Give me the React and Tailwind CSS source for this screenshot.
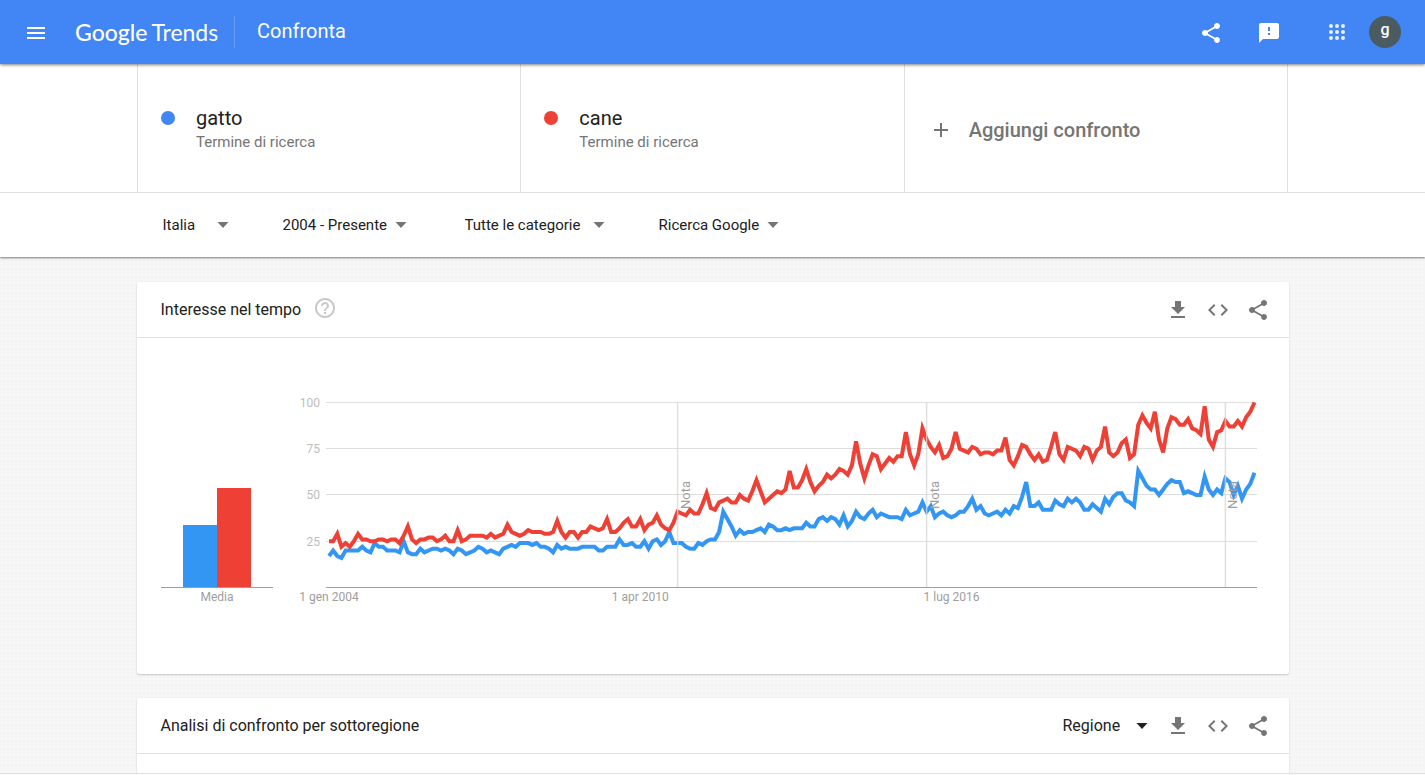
import { useState } from "react";

import {
  MdAdd,
  MdCode,
  MdFeedback,
  MdGetApp,
  MdHelpOutline,
  MdMenu,
  MdShare,
} from "react-icons/md";

// monthly values, january 2004 - august 2022
const gatto = [
  17, 20, 17, 16, 20, 20, 20, 20, 22, 20, 19, 24, 22, 22, 20, 20, 20, 19, 25,
  19, 18, 18, 21, 19, 20, 21, 21, 20, 21, 20, 18, 21, 20, 18, 19, 20, 22, 21,
  19, 20, 19, 18, 21, 22, 23, 22, 24, 24, 24, 23, 24, 22, 22, 21, 19, 23, 21,
  22, 21, 21, 21, 22, 22, 22, 22, 20, 20, 22, 22, 22, 26, 23, 23, 24, 22, 22,
  25, 21, 25, 26, 23, 25, 30, 24, 24, 24, 22, 21, 21, 24, 23, 25, 26, 26, 30,
  41, 37, 33, 28, 31, 29, 30, 30, 31, 32, 30, 34, 33, 31, 31, 32, 31, 32, 32,
  32, 35, 33, 33, 37, 38, 36, 38, 37, 34, 39, 33, 36, 41, 38, 37, 40, 42, 38,
  40, 39, 38, 38, 38, 37, 42, 39, 40, 41, 46, 41, 44, 38, 40, 41, 39, 38, 39,
  41, 41, 44, 48, 42, 44, 40, 39, 40, 41, 39, 42, 40, 44, 43, 49, 57, 44, 44,
  46, 42, 42, 42, 47, 45, 44, 48, 46, 48, 46, 42, 42, 45, 43, 41, 48, 45, 49,
  51, 51, 47, 46, 44, 63, 59, 55, 53, 53, 50, 53, 56, 58, 57, 57, 51, 52, 51,
  50, 50, 60, 53, 50, 53, 51, 59, 57, 50, 55, 48, 53, 56, 62,
];

const cane = [
  25, 25, 29, 22, 24, 22, 25, 29, 26, 26, 25, 25, 26, 26, 25, 26, 26, 24, 28,
  33, 26, 24, 26, 26, 27, 27, 25, 26, 28, 25, 25, 31, 25, 26, 28, 28, 28, 28,
  27, 29, 27, 28, 29, 34, 30, 29, 28, 29, 31, 30, 30, 30, 29, 29, 30, 36, 30,
  27, 30, 30, 27, 30, 30, 33, 32, 31, 32, 37, 30, 30, 32, 35, 37, 33, 33, 37,
  31, 34, 35, 39, 34, 32, 31, 35, 41, 40, 39, 42, 40, 40, 45, 51, 43, 42, 46,
  47, 48, 46, 46, 50, 48, 47, 52, 58, 52, 46, 48, 50, 52, 51, 53, 63, 54, 54,
  58, 64, 57, 52, 55, 57, 61, 59, 61, 64, 63, 61, 66, 79, 67, 59, 66, 72, 71,
  64, 67, 70, 68, 71, 71, 84, 72, 66, 72, 86, 80, 76, 73, 77, 70, 71, 75, 84,
  75, 74, 73, 76, 75, 72, 73, 73, 72, 74, 74, 81, 69, 66, 71, 77, 76, 72, 69,
  72, 68, 69, 76, 84, 72, 69, 76, 75, 74, 71, 76, 75, 69, 74, 76, 87, 73, 71,
  73, 78, 80, 70, 72, 88, 93, 89, 86, 95, 80, 73, 86, 92, 91, 88, 88, 91, 86,
  85, 83, 98, 80, 76, 84, 85, 90, 87, 87, 90, 87, 92, 95, 100,
];

const BASE_Y = 197.5;

const pointX = (index) => 32 + index * 4.15;
const pointY = (value) => BASE_Y - value * 1.85;

const toPoints = (values) =>
  values.map((value, index) => `${pointX(index)},${pointY(value)}`).join(" ");

const gridLines = [
  { label: "100", y: 12.5 },
  { label: "75", y: 58.5 },
  { label: "50", y: 104.5 },
  { label: "25", y: 151.5 },
];

const dateLabels = [
  { label: "1 gen 2004", index: 0 },
  { label: "1 apr 2010", index: 75 },
  { label: "1 lug 2016", index: 150 },
];

// january 2011, 2016 and 2022
const notes = [84, 144, 216];

const terms = [
  { name: "gatto", dot: "bg-[#4285f4]" },
  { name: "cane", dot: "bg-[#ee4035]" },
];

const filters = [
  { id: "geo", label: "Paese", value: "Italia", width: "w-[66px]" },
  { id: "time", label: "Periodo", value: "2004 - Presente", width: "w-[124px]" },
  { id: "cat", label: "Categoria", value: "Tutte le categorie", width: "w-[140px]" },
  { id: "type", label: "Tipo di ricerca", value: "Ricerca Google", width: "w-[120px]" },
];

function Dropdown({ id, label, value, className, arrow }) {
  return (
    <div className={`relative flex items-center ${className}`}>
      <select
        id={id}
        aria-label={label}
        defaultValue={value}
        className="w-full appearance-none bg-transparent outline-none"
      >
        <option>{value}</option>
      </select>
      <svg
        viewBox="0 0 12 6"
        className={`pointer-events-none absolute right-0 h-1.5 w-3 ${arrow}`}
      >
        <path d="M0.5 0h11L6 6z" fill="currentColor" />
      </svg>
    </div>
  );
}

function CardActions() {
  return (
    <div className="flex items-center gap-4 text-[#757575]">
      <button aria-label="Scarica">
        <MdGetApp size={24} />
      </button>
      <button aria-label="Incorpora">
        <MdCode size={24} />
      </button>
      <button aria-label="Condividi">
        <MdShare size={24} />
      </button>
    </div>
  );
}

function Header() {
  return (
    <header className="relative z-10 flex h-16 items-center bg-[#4285f4] px-6 text-white shadow-[0_1px_3px_rgba(0,0,0,0.5)]">
      <button aria-label="Menu principale" className="pt-0.5">
        <MdMenu size={24} />
      </button>

      <a
        href="#"
        aria-label="Google Trends"
        className="ml-[27px] flex w-[160px] items-baseline gap-1 border-r border-[#669df6] font-[Lato,sans-serif] text-[23px] leading-8"
      >
        <span className="font-medium">Google</span>
        <span>Trends</span>
      </a>

      <h1 className="ml-[22px] pb-0.5 text-xl">Confronta</h1>

      <div className="ml-auto flex items-center">
        <button aria-label="Condividi" className="mr-[34px] pt-0.5">
          <MdShare size={24} />
        </button>
        <button aria-label="Invia feedback" className="mr-11 pt-0.5">
          <MdFeedback size={24} />
        </button>
        <button aria-label="App Google" className="mr-5">
          <svg viewBox="0 0 24 24" className="size-6" fill="#e8f0fe">
            {[6, 12, 18].map((cy) =>
              [6, 12, 18].map((cx) => (
                <circle key={`${cx}-${cy}`} cx={cx} cy={cy} r="2" />
              )),
            )}
          </svg>
        </button>
        <button
          aria-label="Account"
          className="size-8 rounded-full bg-[#4b5b62] pb-1 text-base leading-none font-medium"
        >
          g
        </button>
      </div>
    </header>
  );
}

function AverageChart() {
  return (
    <svg viewBox="0 0 112 220" className="w-28 shrink-0">
      <rect x="22" y="135" width="34" height="62" fill="#3396f3" />
      <rect x="56" y="98" width="34" height="99" fill="#ee4035" />
      <line x1="0" x2="112" y1={BASE_Y} y2={BASE_Y} stroke="#9e9e9e" />
      <text x="56" y="211" fontSize="12" textAnchor="middle" fill="#9e9e9e">
        Media
      </text>
    </svg>
  );
}

function TimeChart() {
  return (
    <svg viewBox="0 0 968 220" className="min-w-0 flex-1">
      {gridLines.map((line) => (
        <g key={line.label}>
          <line x1="29" x2="960" y1={line.y} y2={line.y} stroke="#dedede" />
          <text
            x="23"
            y={line.y + 4.5}
            fontSize="12"
            textAnchor="end"
            fill="#bdbdbd"
          >
            {line.label}
          </text>
        </g>
      ))}
      <line x1="29" x2="960" y1={BASE_Y} y2={BASE_Y} stroke="#9e9e9e" />

      <polyline
        points={toPoints(gatto)}
        fill="none"
        stroke="#3396f3"
        strokeWidth="4"
      />
      <polyline
        points={toPoints(cane)}
        fill="none"
        stroke="#ee4035"
        strokeWidth="4"
      />

      {notes.map((index) => (
        <g key={index}>
          <line
            x1={pointX(index)}
            x2={pointX(index)}
            y1="12"
            y2="197"
            stroke="#d8d8d8"
            strokeOpacity="0.8"
            strokeWidth="1.5"
          />
          <text
            transform={`translate(${pointX(index) + 12} 119) rotate(-90)`}
            fontSize="13"
            fill="#9e9e9e"
          >
            Nota
          </text>
        </g>
      ))}

      {dateLabels.map((date) => (
        <text
          key={date.label}
          x={pointX(date.index)}
          y="211"
          fontSize="12"
          textAnchor="middle"
          fill="#9e9e9e"
        >
          {date.label}
        </text>
      ))}
    </svg>
  );
}

function App() {
  const [compared] = useState(terms);

  return (
    <div className="bg-[#f5f5f5] font-[Roboto,sans-serif] text-[#212121]">
      <Header />

      <section className="border-b border-[#e0e0e0] bg-white">
        <div className="mx-auto grid h-32 max-w-[1151px] grid-cols-3 border-r border-[#e0e0e0]">
          {compared.map((term) => (
            <div
              key={term.name}
              className="flex items-center gap-[21px] border-l border-[#e0e0e0] pl-[23px]"
            >
              <span className={`mb-5 size-3.5 rounded-full ${term.dot}`} />
              <div>
                <p className="text-xl leading-7">{term.name}</p>
                <p className="text-[15px] leading-5 text-[#757575]">
                  Termine di ricerca
                </p>
              </div>
            </div>
          ))}

          <button className="flex items-center gap-4 border-l border-[#e0e0e0] pt-1 pl-6 text-xl font-medium text-[#757575]">
            <MdAdd size={24} />
            Aggiungi confronto
          </button>
        </div>
      </section>

      <section className="relative bg-white shadow-[0_1px_2px_rgba(0,0,0,0.5)] [clip-path:inset(0_0_-8px_0)]">
        <div className="mx-auto grid h-16 max-w-6xl grid-cols-[120px_182px_194px_120px] items-center pl-[26px] text-[15px]">
          {filters.map((filter) => (
            <Dropdown
              key={filter.id}
              id={filter.id}
              label={filter.label}
              value={filter.value}
              className={filter.width}
              arrow="text-[#757575]"
            />
          ))}
        </div>
      </section>

      <main className="bg-[radial-gradient(#f8f8f8_1px,transparent_1px)] bg-size-[4px_4px] pt-[25px]">
        <div className="mx-auto flex max-w-6xl flex-col gap-6">
          <section className="rounded-xs bg-white shadow-[0_1px_2px_rgba(0,0,0,0.2)]">
            <div className="flex h-14 items-center border-b border-[#e0e0e0] pr-[19px] pl-6">
              <h2>Interesse nel tempo</h2>
              <button aria-label="Guida" className="ml-3 pb-1 text-[#c8c8c8]">
                <MdHelpOutline size={24} />
              </button>
              <div className="ml-auto">
                <CardActions />
              </div>
            </div>

            <div className="flex gap-6 px-6 pt-13 pb-16">
              <AverageChart />
              <TimeChart />
            </div>
          </section>

          <section className="rounded-t-xs bg-white shadow-[0_1px_2px_rgba(0,0,0,0.2)]">
            <div className="flex h-14 items-center border-b border-[#e0e0e0] pr-[19px] pl-6">
              <h2>Analisi di confronto per sottoregione</h2>
              <div className="ml-auto flex items-center gap-[18px]">
                <Dropdown
                  id="resolution"
                  label="Risoluzione"
                  value="Regione"
                  className="w-[85px]"
                  arrow="text-[#212121]"
                />
                <CardActions />
              </div>
            </div>
            <div className="h-[19px]" />
          </section>
        </div>
      </main>

      <footer className="relative h-0.5 border-t border-[#e0e0e0] bg-[#fafafa]" />
    </div>
  );
}

export default App;
